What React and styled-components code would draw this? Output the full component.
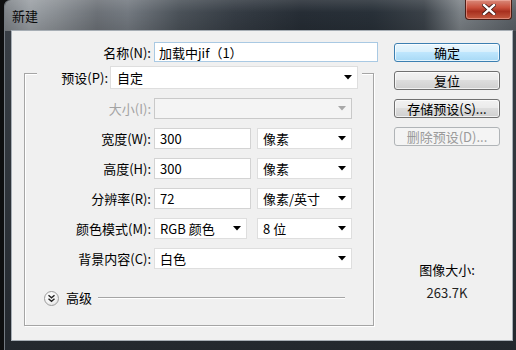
import React from "react";
import styled, { createGlobalStyle } from "styled-components";

const Global = createGlobalStyle`
  html, body { margin: 0; padding: 0; background: #0e0f10; }
  body {
    font-family: "Noto Sans CJK SC", "Noto Sans", sans-serif;
    font-size: 13px;
    color: #000;
  }
  * { box-sizing: border-box; }
`;

const Screen = styled.div`
  width: 516px;
  height: 350px;
  overflow: hidden;
  padding-left: 4px;
  background: #0e0f10;
`;

const Window = styled.div`
  width: 512px;
  height: 350px;
  border-left: 1px solid #737a81;
  border-radius: 6px 0 0 0;
  background: linear-gradient(180deg, #3b4148 0%, #23282e 100%);
  display: flex;
  flex-direction: column;
`;

const TitleBar = styled.div`
  height: 31px;
  flex: none;
  display: flex;
  padding: 0 4px 0 7px;
  border-radius: 6px 0 0 0;
  background:
    linear-gradient(180deg, rgba(255,255,255,0.12) 0%, rgba(255,255,255,0) 40%, rgba(0,0,0,0.12) 100%),
    linear-gradient(90deg, #7d8287 0%, #9a9fa4 5%, #8a8f94 10%, #6c7177 18%, #737980 24%, #4b5259 34%, #353c44 45%, #262d35 58%, #283038 72%, #3a4148 82%, #7b8186 89%, #5a6066 100%);
`;

const Title = styled.div`
  font-size: 13px;
  line-height: 31px;
  color: #0a0a0a;
`;

const CloseButton = styled.div`
  margin-left: auto;
  width: 47px;
  height: 20px;
  border: 1px solid #4a1d16;
  border-top: none;
  border-radius: 0 0 4px 4px;
  background: linear-gradient(180deg, #d98a7a 0%, #c9503c 40%, #a8301f 60%, #c45a40 100%);
  box-shadow: inset 0 0 0 1px rgba(255, 200, 190, 0.45);
  display: flex;
  align-items: center;
  justify-content: center;
`;

const Client = styled.div`
  margin: 0 4px 0 7px;
  height: 309px;
  flex: none;
  background: #f0f0f0;
  box-shadow: 0 0 0 1px #a7aeb5;
  display: flex;
`;

const FormArea = styled.div`
  width: 370px;
  flex: none;
  display: flex;
  flex-direction: column;
  padding-top: 11px;
`;

const Row = styled.div`
  display: flex;
  align-items: center;
  height: ${(p) => p.$h || 21}px;
`;

const Label = styled.div`
  flex: none;
  width: ${(p) => p.$w}px;
  margin-right: ${(p) => (p.$mr ?? 3)}px;
  text-align: right;
  white-space: nowrap;
  line-height: 21px;
  color: ${(p) => (p.$disabled ? "#a3a3a3" : "#000")};
`;

const Field = styled.div`
  flex: none;
  width: ${(p) => p.$w}px;
  height: ${(p) => p.$h || 21}px;
  background: #fff;
  border: 1px solid ${(p) => (p.$focus ? "#a9c9e3" : "#d3d3d3")};
  padding-left: ${(p) => p.$pl || 5}px;
  display: flex;
  align-items: center;
  white-space: nowrap;
  line-height: 1;
`;

const Select = styled.div`
  flex: none;
  width: ${(p) => p.$w}px;
  height: ${(p) => p.$h || 21}px;
  background: ${(p) => (p.$disabled ? "#f4f4f4" : "#fff")};
  border: 1px solid ${(p) => (p.$disabled ? "#c9c9c9" : "#dedede")};
  padding: 0 5px 0 ${(p) => p.$pl || 5}px;
  display: flex;
  align-items: center;
  justify-content: space-between;
  white-space: nowrap;
  line-height: 1;
`;

const GroupBox = styled.div`
  margin: 11px 0 0 12px;
  width: 350px;
  height: 253px;
  border: 1px solid #a5a5a5;
  box-shadow: inset 1px 1px 0 #fff, 1px 1px 0 #fff;
  display: flex;
  flex-direction: column;
`;

const Legend = styled.div`
  margin: -8px 0 0 12px;
  width: 325px;
  height: 23px;
  background: #f0f0f0;
  display: flex;
  align-items: center;
`;

const FieldList = styled.div`
  margin-top: 9px;
  display: flex;
  flex-direction: column;
  gap: 9px;
`;

const Controls = styled.div`
  display: flex;
  gap: ${(p) => p.$gap || 6}px;
`;

const AdvancedRow = styled.div`
  margin-top: 21px;
  height: 16px;
  padding-left: 19px;
  display: flex;
  align-items: center;
`;

const Chevron = styled.div`
  width: 15px;
  height: 15px;
  flex: none;
  border-radius: 50%;
  border: 1px solid #9c9c9c;
  background: radial-gradient(circle at 40% 35%, #ffffff 0%, #f4f4f4 50%, #d6d6d6 100%);
  display: flex;
  align-items: center;
  justify-content: center;
`;

const AdvancedText = styled.div`
  margin-left: 7px;
  line-height: 16px;
`;

const Rule = styled.div`
  margin-left: 6px;
  width: 247px;
  height: 2px;
  border-top: 1px solid #a5a5a5;
  border-bottom: 1px solid #fff;
`;

const ButtonColumn = styled.div`
  margin-left: 12px;
  padding-top: 12px;
  width: 106px;
  display: flex;
  flex-direction: column;
`;

const ButtonStack = styled.div`
  display: flex;
  flex-direction: column;
  gap: 9px;
`;

const Button = styled.div`
  height: 19px;
  border-radius: 3px;
  border: 1px solid ${(p) => (p.$default ? "#3c7fb1" : p.$disabled ? "#b0b4b7" : "#707070")};
  background: ${(p) =>
    p.$default
      ? "linear-gradient(180deg, #eaf6fd 0%, #d9f0fc 45%, #bee6fd 50%, #a7d9f5 100%)"
      : p.$disabled
      ? "#f4f4f4"
      : "linear-gradient(180deg, #f2f2f2 0%, #ebebeb 45%, #dddddd 50%, #cfcfcf 100%)"};
  box-shadow: inset 0 0 0 1px ${(p) => (p.$disabled ? "transparent" : "rgba(255,255,255,0.7)")};
  color: ${(p) => (p.$disabled ? "#9a9a9a" : "#000")};
  display: flex;
  align-items: center;
  justify-content: center;
  line-height: 1;
  white-space: nowrap;
`;

const InfoLabel = styled.div`
  margin-top: 116px;
  text-align: center;
  line-height: 16px;
`;

const InfoValue = styled.div`
  margin-top: 7px;
  text-align: center;
  line-height: 16px;
  color: #222;
`;

const Arrow = ({ disabled }) => (
  <svg width="8" height="5" viewBox="0 0 8 5">
    <path d="M0 0 H8 L4 4.5 Z" fill={disabled ? "#a8a8a8" : "#000"} />
  </svg>
);

const CloseIcon = () => (
  <svg width="14" height="11" viewBox="0 0 14 11">
    <path d="M2 1 L12 10 M12 1 L2 10" stroke="#3a1410" strokeWidth="4" strokeLinecap="square" />
    <path d="M2 1 L12 10 M12 1 L2 10" stroke="#fff" strokeWidth="2.4" strokeLinecap="square" />
  </svg>
);

const DoubleChevron = () => (
  <svg width="9" height="9" viewBox="0 0 9 9">
    <path d="M1.5 1.2 L4.5 3.8 L7.5 1.2 M1.5 4.8 L4.5 7.4 L7.5 4.8" stroke="#222" strokeWidth="1.4" fill="none" />
  </svg>
);

export default function App() {
  return (
    <>
      <Global />
      <Screen>
        <Window>
          <TitleBar>
            <Title>新建</Title>
            <CloseButton>
              <CloseIcon />
            </CloseButton>
          </TitleBar>
          <Client>
            <FormArea>
              <Row $h={20}>
                <Label $w={139}>名称(N):</Label>
                <Field $w={224} $h={20} $focus $pl={4}>
                  加载中jif（1）
                </Field>
              </Row>
              <GroupBox>
                <Legend>
                  <Label $w={71} $mr={2}>预设(P):</Label>
                  <Select $w={248} $h={23} $pl={6}>
                    自定
                    <Arrow />
                  </Select>
                </Legend>
                <FieldList>
                  <Row>
                    <Label $w={126} $disabled>大小(I):</Label>
                    <Select $w={198} $disabled>
                      <span />
                      <Arrow disabled />
                    </Select>
                  </Row>
                  <Row>
                    <Label $w={126}>宽度(W):</Label>
                    <Controls>
                      <Field $w={97}>300</Field>
                      <Select $w={95}>
                        像素
                        <Arrow />
                      </Select>
                    </Controls>
                  </Row>
                  <Row>
                    <Label $w={126}>高度(H):</Label>
                    <Controls>
                      <Field $w={97}>300</Field>
                      <Select $w={95}>
                        像素
                        <Arrow />
                      </Select>
                    </Controls>
                  </Row>
                  <Row>
                    <Label $w={126}>分辨率(R):</Label>
                    <Controls>
                      <Field $w={97}>72</Field>
                      <Select $w={95}>
                        像素/英寸
                        <Arrow />
                      </Select>
                    </Controls>
                  </Row>
                  <Row>
                    <Label $w={126}>颜色模式(M):</Label>
                    <Controls $gap={10}>
                      <Select $w={93}>
                        RGB 颜色
                        <Arrow />
                      </Select>
                      <Select $w={95}>
                        8 位
                        <Arrow />
                      </Select>
                    </Controls>
                  </Row>
                  <Row>
                    <Label $w={126}>背景内容(C):</Label>
                    <Select $w={198}>
                      白色
                      <Arrow />
                    </Select>
                  </Row>
                </FieldList>
                <AdvancedRow>
                  <Chevron>
                    <DoubleChevron />
                  </Chevron>
                  <AdvancedText>高级</AdvancedText>
                  <Rule />
                </AdvancedRow>
              </GroupBox>
            </FormArea>
            <ButtonColumn>
              <ButtonStack>
                <Button $default>确定</Button>
                <Button>复位</Button>
                <Button>存储预设(S)...</Button>
                <Button $disabled>删除预设(D)...</Button>
              </ButtonStack>
              <InfoLabel>图像大小:</InfoLabel>
              <InfoValue>263.7K</InfoValue>
            </ButtonColumn>
          </Client>
        </Window>
      </Screen>
    </>
  );
}
